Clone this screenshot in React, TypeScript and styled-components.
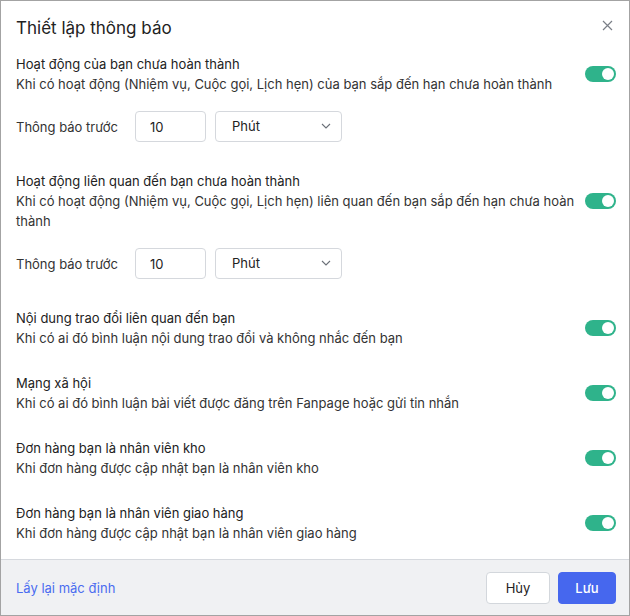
import * as React from 'react';
import styled, { createGlobalStyle } from 'styled-components';

const GlobalStyle = createGlobalStyle`
  html, body {
    margin: 0;
    padding: 0;
    background: #ffffff;
  }
  body {
    font-family: Inter, Roboto, 'Noto Sans', sans-serif;
  }
`;

const Dialog = styled.div`
  box-sizing: border-box;
  width: 630px;
  height: 616px;
  border: 1px solid #a3a3a3;
  background: #ffffff;
  display: flex;
  flex-direction: column;
`;

const Header = styled.div`
  display: flex;
  align-items: center;
  justify-content: space-between;
  padding: 15px 14px 0 15px;
  height: 24px;
`;

const Title = styled.div`
  font-size: 17px;
  line-height: 24px;
  color: #222222;
`;

const CloseBtn = styled.button`
  border: none;
  background: transparent;
  padding: 0;
  width: 16px;
  height: 16px;
  display: flex;
  align-items: center;
  justify-content: center;
  cursor: pointer;
  color: #7a7f87;
  margin-top: -6px;
`;

const Body = styled.div`
  flex: 1;
  display: flex;
  flex-direction: column;
  gap: 25px;
  padding: 14px 13px 0 15px;
`;

const Section = styled.div<{ $withRow?: boolean }>`
  display: flex;
  flex-direction: column;
  padding-bottom: ${(p) => (p.$withRow ? '4px' : '0')};
`;

const ItemRow = styled.div`
  display: flex;
  align-items: center;
  gap: 4px;
`;

const TextCol = styled.div`
  flex: 1;
`;

const ItemTitle = styled.div`
  font-size: 13px;
  line-height: 20px;
  color: #222222;
`;

const ItemDesc = styled.div`
  font-size: 13px;
  line-height: 20px;
  color: #333333;
`;

const Toggle = styled.button<{ $on: boolean }>`
  box-sizing: border-box;
  width: 31px;
  height: 16px;
  border-radius: 8px;
  border: none;
  padding: 2px;
  margin-left: auto;
  background: ${(p) => (p.$on ? '#2fb38b' : '#c9cdd3')};
  display: flex;
  justify-content: ${(p) => (p.$on ? 'flex-end' : 'flex-start')};
  cursor: pointer;
  flex-shrink: 0;
  &::after {
    content: '';
    width: 12px;
    height: 12px;
    border-radius: 50%;
    background: #ffffff;
  }
`;

const RemindRow = styled.div`
  display: flex;
  align-items: center;
  margin-top: 17px;
`;

const RemindLabel = styled.span`
  font-size: 13px;
  color: #333333;
  width: 119px;
`;

const NumberBox = styled.input`
  box-sizing: border-box;
  width: 71px;
  height: 31px;
  border: 1px solid #d5d8dd;
  border-radius: 4px;
  padding: 0 14px;
  font-family: Inter, Roboto, sans-serif;
  font-size: 13px;
  color: #222222;
  outline: none;
`;

const SelectBox = styled.div`
  box-sizing: border-box;
  width: 127px;
  height: 31px;
  margin-left: 9px;
  border: 1px solid #d5d8dd;
  border-radius: 4px;
  padding: 0 10px 2px 16px;
  display: flex;
  align-items: center;
  justify-content: space-between;
  font-family: Inter, Roboto, sans-serif;
  font-size: 13px;
  color: #222222;
`;

const Footer = styled.div`
  height: 55px;
  border-top: 1px solid #d6d9de;
  background: #f0f1f3;
  display: flex;
  align-items: center;
  justify-content: space-between;
  padding: 0 13px 0 15px;
`;

const ResetLink = styled.a`
  font-size: 13px;
  color: #4a6cf0;
  text-decoration: none;
  cursor: pointer;
`;

const Actions = styled.div`
  display: flex;
  gap: 8px;
`;

const Btn = styled.button<{ $primary?: boolean }>`
  box-sizing: border-box;
  height: 32px;
  padding: 0;
  border-radius: 4px;
  font-family: Inter, Roboto, sans-serif;
  font-size: 13px;
  cursor: pointer;
  border: 1px solid ${(p) => (p.$primary ? '#4667ee' : '#d3d7dc')};
  background: ${(p) => (p.$primary ? '#4667ee' : '#ffffff')};
  color: ${(p) => (p.$primary ? '#ffffff' : '#222222')};
  font-weight: ${(p) => (p.$primary ? 500 : 400)};
  width: ${(p) => (p.$primary ? '58px' : '64px')};
`;

type TItem = {
  key: string;
  title: string;
  desc: string;
  remind?: boolean;
};

const items: TItem[] = [
  {
    key: 'mine',
    title: 'Hoạt động của bạn chưa hoàn thành',
    desc: 'Khi có hoạt động (Nhiệm vụ, Cuộc gọi, Lịch hẹn) của bạn sắp đến hạn chưa hoàn thành',
    remind: true,
  },
  {
    key: 'related',
    title: 'Hoạt động liên quan đến bạn chưa hoàn thành',
    desc: 'Khi có hoạt động (Nhiệm vụ, Cuộc gọi, Lịch hẹn) liên quan đến bạn sắp đến hạn chưa hoàn thành',
    remind: true,
  },
  {
    key: 'comment',
    title: 'Nội dung trao đổi liên quan đến bạn',
    desc: 'Khi có ai đó bình luận nội dung trao đổi và không nhắc đến bạn',
  },
  {
    key: 'social',
    title: 'Mạng xã hội',
    desc: 'Khi có ai đó bình luận bài viết được đăng trên Fanpage hoặc gửi tin nhắn',
  },
  {
    key: 'warehouse',
    title: 'Đơn hàng bạn là nhân viên kho',
    desc: 'Khi đơn hàng được cập nhật bạn là nhân viên kho',
  },
  {
    key: 'delivery',
    title: 'Đơn hàng bạn là nhân viên giao hàng',
    desc: 'Khi đơn hàng được cập nhật bạn là nhân viên giao hàng',
  },
];

function App() {
  const [enabled, setEnabled] = React.useState<Record<string, boolean>>(() =>
    Object.fromEntries(items.map((i) => [i.key, true])),
  );

  return (
    <>
      <GlobalStyle />
      <Dialog>
        <Header>
          <Title>Thiết lập thông báo</Title>
          <CloseBtn aria-label="close">
            <svg width="11" height="11" viewBox="0 0 11 11">
              <path d="M1 1L10 10M10 1L1 10" stroke="currentColor" strokeWidth="1.2" />
            </svg>
          </CloseBtn>
        </Header>
        <Body>
          {items.map((item) => (
            <Section key={item.key} $withRow={item.remind}>
              <ItemRow>
                <TextCol>
                  <ItemTitle>{item.title}</ItemTitle>
                  <ItemDesc>{item.desc}</ItemDesc>
                </TextCol>
                <Toggle
                  $on={enabled[item.key]}
                  onClick={() => setEnabled({ ...enabled, [item.key]: !enabled[item.key] })}
                />
              </ItemRow>
              {item.remind && (
                <RemindRow>
                  <RemindLabel>Thông báo trước</RemindLabel>
                  <NumberBox defaultValue="10" />
                  <SelectBox>
                    <span>Phút</span>
                    <svg width="10" height="6" viewBox="0 0 10 6">
                      <path d="M1 1L5 5L9 1" fill="none" stroke="#6b7078" strokeWidth="1.1" />
                    </svg>
                  </SelectBox>
                </RemindRow>
              )}
            </Section>
          ))}
        </Body>
        <Footer>
          <ResetLink>Lấy lại mặc định</ResetLink>
          <Actions>
            <Btn>Hủy</Btn>
            <Btn $primary>Lưu</Btn>
          </Actions>
        </Footer>
      </Dialog>
    </>
  );
}

export default App;
